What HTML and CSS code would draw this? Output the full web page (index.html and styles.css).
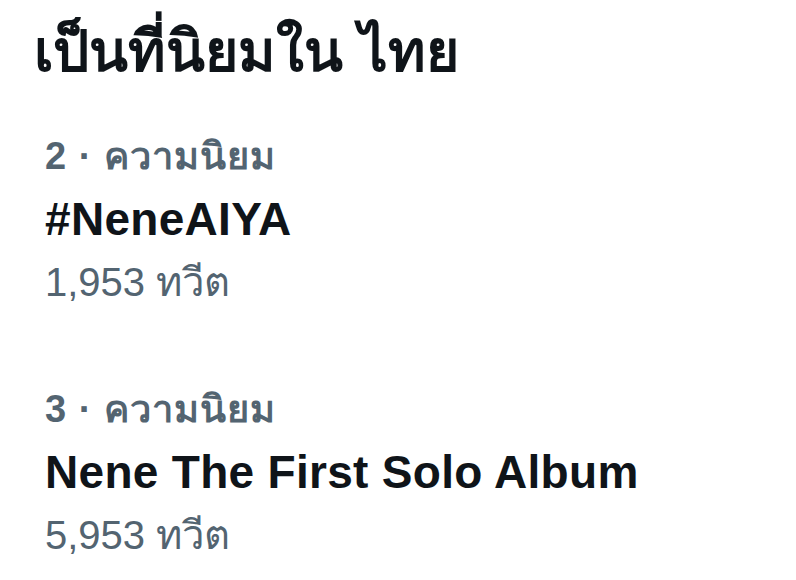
FILE: index.html
```html
<!DOCTYPE html>
<html lang="th">
<head>
<meta charset="utf-8">
<link rel="stylesheet" href="styles.css">
</head>
<body>
<main class="panel">
  <h1 class="title">เป็นที่นิยมใน ไทย</h1>
  <section class="trend">
    <div class="meta">2 · ความนิยม</div>
    <div class="name">#NeneAIYA</div>
    <div class="count">1,953 ทวีต</div>
  </section>
  <section class="trend">
    <div class="meta">3 · ความนิยม</div>
    <div class="name">Nene The First Solo Album</div>
    <div class="count">5,953 ทวีต</div>
  </section>
</main>
</body>
</html>
```

FILE: styles.css
```css
html, body {
  margin: 0;
  padding: 0;
  background: #ffffff;
}

.panel {
  width: 796px;
  height: 580px;
  box-sizing: border-box;
  padding: 19px 0 0 34px;
  font-family: "Liberation Sans", "Noto Sans", sans-serif;
  color: #0f1419;
  display: flex;
  flex-direction: column;
}

.title {
  margin: 0;
  font-size: 57px;
  font-weight: 700;
  line-height: 64px;
}

.trend {
  display: flex;
  flex-direction: column;
  gap: 7px;
  padding-left: 11px;
  margin-top: 49px;
}

.trend + .trend {
  margin-top: 79px;
}

.meta {
  font-size: 38px;
  font-weight: 700;
  color: #536471;
  line-height: 48px;
  letter-spacing: 1px;
}

.name {
  font-size: 46px;
  font-weight: 700;
  line-height: 64px;
  letter-spacing: 0.3px;
}

.count {
  font-size: 40px;
  color: #536471;
  line-height: 48px;
}
```
